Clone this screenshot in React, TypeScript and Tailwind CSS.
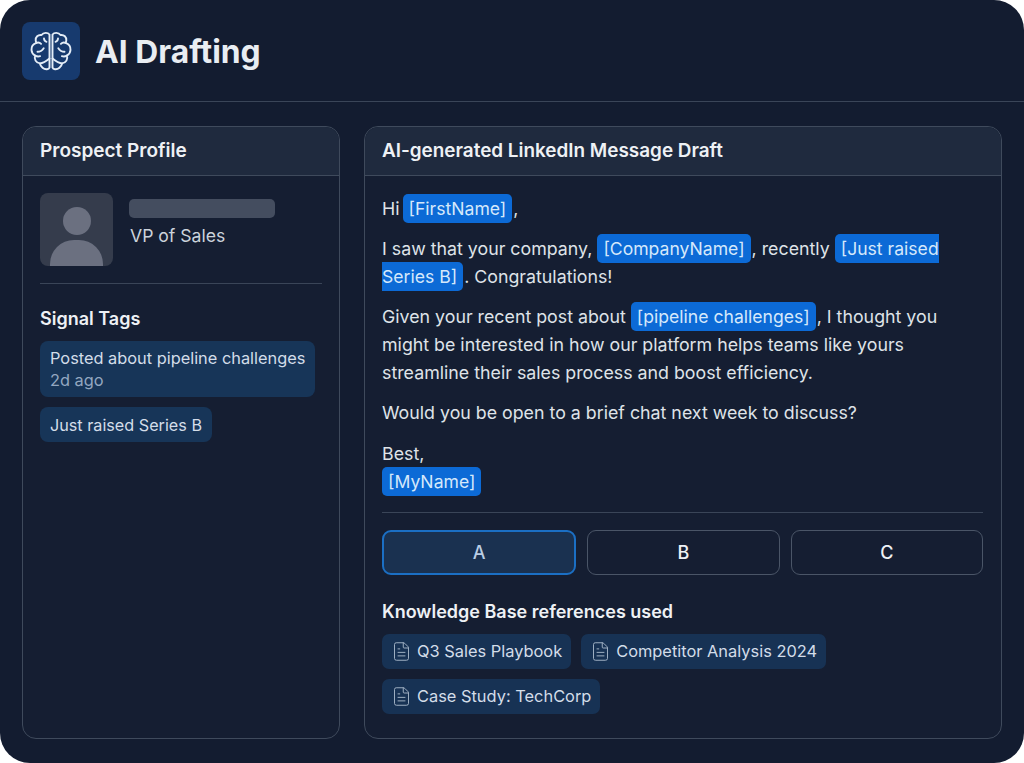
import { FileText } from 'lucide-react';

function BrainIcon() {
    const half = (
        <>
            <path d="M19 3.5C17.5 1.5 13 1 11 4C7.5 3.5 4.8 6 5.2 9.5C5.3 10.5 5.6 11 6 11.8C2.5 13 0.8 15.8 1 19C1.2 21.5 2.6 23.6 4.6 24.6C3.4 28 5.4 32 9.4 32.4C10 36 13.5 38.6 16.5 38.2C17.8 38 18.6 37.5 19 36.6V3.5Z" />
            <path d="M6 11.8C7.5 11.4 9.4 11.6 10.6 12.8" />
            <path d="M13.5 7.5C13.6 9.2 14.6 10.4 16 10.8" />
            <path d="M7 20.8C9.4 20.8 11.6 19.6 13.2 17.2" />
            <path d="M4.6 24.6C6.2 25.6 8 25.8 9.6 25.2" />
            <path d="M9.4 32.4C12.6 32.4 15.6 30.4 19 27.6" />
        </>
    );
    return (
        <svg width="42" height="40" viewBox="0 0 41 40" fill="none" stroke="#e4edf7" strokeWidth="1.9" strokeLinecap="round" strokeLinejoin="round">
            <g>{half}</g>
            <g transform="matrix(-1 0 0 1 41 0)">{half}</g>
        </svg>
    );
}

function Tag({ children }: { children: React.ReactNode }) {
    return <span className="rounded-[5px] bg-[#0c6ad6] px-[6px] py-[4px] text-[17.6px] text-[#d5e8fb]">{children}</span>;
}

function KbChip({ label }: { label: string }) {
    return (
        <div className="flex h-[35px] items-center gap-[5px] rounded-[7px] bg-[#173254] pl-[9px] pr-[9px] text-[16.4px] text-[#d3dde9]">
            <FileText size={21} strokeWidth={1.1} className="text-[#a3b3c6]" />
            <span>{label}</span>
        </div>
    );
}

function VariantButton({ label, active }: { label: string; active?: boolean }) {
    return (
        <button
            type="button"
            className={
                active
                    ? 'h-[45px] flex-1 rounded-[9px] border-2 border-[#1b6fc4] bg-[#1a3150] text-[18px] font-medium text-[#b9cde4]'
                    : 'h-[45px] flex-1 rounded-[9px] border border-[#4a5567] text-[18px] font-medium text-[#eef2f6]'
            }
        >
            {label}
        </button>
    );
}

export default function App() {
    return (
        <div className="h-[763px] w-[1024px] overflow-hidden bg-white font-['Inter',sans-serif]">
            <div className="flex h-full flex-col rounded-[30px] bg-[#131c30]">
                <header className="flex h-[102px] shrink-0 items-center gap-[15px] border-b border-[#3a4558] px-[22px]">
                    <div className="flex h-[58px] w-[58px] items-center justify-center rounded-[8px] bg-[#173a6e]">
                        <BrainIcon />
                    </div>
                    <h1 className="mt-[3px] text-[31.8px] font-bold text-[#e9edf2]">AI Drafting</h1>
                </header>

                <main className="flex min-h-0 flex-1 gap-[24px] pb-[24px] pl-[22px] pr-[22px] pt-[24px]">
                    <section className="flex w-[318px] shrink-0 flex-col rounded-[14px] border border-[#3f4a5c] bg-[#151e32]">
                        <div className="flex h-[49px] shrink-0 items-center rounded-t-[14px] border-b border-[#3f4a5c] bg-[#1f2a3e] px-[17px] text-[19px] font-semibold text-[#eef1f5]">
                            Prospect Profile
                        </div>
                        <div className="px-[17px] pt-[17px]">
                            <div className="flex gap-[16px] border-b border-[#3a4558] pb-[17px]">
                                <div className="flex h-[73px] w-[73px] shrink-0 flex-col items-center justify-end overflow-hidden rounded-[8px] bg-[#353c4c]">
                                    <div className="h-[28px] w-[28px] rounded-full bg-[#6b7080]" />
                                    <div className="mt-[5px] h-[26px] w-[53px] rounded-t-[24px] bg-[#6b7080]" />
                                </div>
                                <div className="pt-[6px]">
                                    <div className="h-[19px] w-[146px] rounded-[5px] bg-[#444d5f]" />
                                    <div className="ml-[1px] mt-[5px] text-[17.6px] text-[#ccd3dc]">VP of Sales</div>
                                </div>
                            </div>
                            <h2 className="mt-[21px] text-[18px] font-semibold text-[#eef1f5]">Signal Tags</h2>
                            <div className="mt-[9px] flex flex-col items-start gap-[10px] pr-[7px]">
                                <div className="w-full rounded-[8px] bg-[#173558] px-[10px] py-[6px] text-[16.35px] leading-[22px] text-[#d3dde9]">
                                    <div className="whitespace-nowrap">Posted about pipeline challenges</div>
                                    <div className="text-[#93a7c0]">2d ago</div>
                                </div>
                                <div className="rounded-[8px] bg-[#173558] px-[10px] py-[6.5px] text-[16.2px] leading-[22px] text-[#d3dde9]">
                                    Just raised Series B
                                </div>
                            </div>
                        </div>
                    </section>

                    <section className="flex min-w-0 flex-1 flex-col rounded-[14px] border border-[#3f4a5c] bg-[#151e32]">
                        <div className="flex h-[49px] shrink-0 items-center rounded-t-[14px] border-b border-[#3f4a5c] bg-[#1f2a3e] px-[17px] text-[18.9px] font-semibold text-[#eef1f5]">
                            AI-generated LinkedIn Message Draft
                        </div>
                        <div className="pl-[17px] pr-[18px] pt-[18.5px]">
                            <div className="flex flex-col gap-[12px] text-[17.8px] leading-[28px] text-[#dfe3e8]">
                                <p>Hi <span className="-ml-[2px]"><Tag>[FirstName]</Tag></span><span className="ml-[1px]">,</span></p>
                                <p>I saw that your company, <Tag>[CompanyName]</Tag><span className="ml-[1px]">, recently</span> <Tag>[Just raised Series B]</Tag><span className="ml-[1px]">. Congratulations!</span></p>
                                <p>Given your recent post about <Tag>[pipeline challenges]</Tag><span className="ml-[1px]">, I thought you</span> might be interested in how our platform helps teams like yours streamline their sales process and boost efficiency.</p>
                                <p>Would you be open to a brief chat next week to discuss?</p>
                                <p className="mt-[1.5px]">Best,<br /><Tag>[MyName]</Tag></p>
                            </div>
                            <div className="mt-[16px] border-t border-[#3a4558] pt-[17px]">
                                <div className="flex gap-[11px]">
                                    <VariantButton label="A" active />
                                    <VariantButton label="B" />
                                    <VariantButton label="C" />
                                </div>
                                <h2 className="mt-[23px] text-[18px] font-semibold text-[#eef1f5]">Knowledge Base references used</h2>
                                <div className="mt-[9px] flex flex-wrap gap-x-[10px] gap-y-[10px]">
                                    <KbChip label="Q3 Sales Playbook" />
                                    <KbChip label="Competitor Analysis 2024" />
                                    <KbChip label="Case Study: TechCorp" />
                                </div>
                            </div>
                        </div>
                    </section>
                </main>
            </div>
        </div>
    );
}
